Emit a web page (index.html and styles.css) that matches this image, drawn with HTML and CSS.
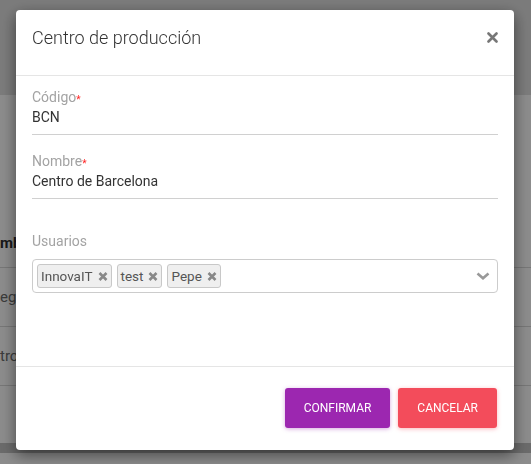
FILE: index.html
```html
<!DOCTYPE html>
<html lang="es">
<head>
    <meta charset="UTF-8">
    <meta name="viewport" content="width=device-width, initial-scale=1.0">
    <title>Centros de producción</title>
    <link rel="stylesheet" href="styles.css">
</head>
<body>
    <div class="page">
        <div class="topbar"></div>
        <div class="table">
            <div class="table-head">mbre</div>
            <div class="table-row">egación</div>
            <div class="table-row">tro de Barcelona</div>
        </div>
        <div class="page-band"></div>
    </div>

    <div class="overlay">
        <div class="modal">
            <div class="modal-header">
                <h4 class="modal-title">Centro de producción</h4>
                <button class="close" aria-label="Cerrar">
                    <svg width="11" height="11" viewBox="0 0 11 11"><path d="M1.5 1.5L9.5 9.5M9.5 1.5L1.5 9.5" stroke="#777" stroke-width="2.6" stroke-linecap="round"/></svg>
                </button>
            </div>

            <div class="modal-body">
                <div class="field">
                    <label>Código<span class="req">*</span></label>
                    <div class="value">BCN</div>
                </div>

                <div class="field">
                    <label>Nombre<span class="req">*</span></label>
                    <div class="value">Centro de Barcelona</div>
                </div>

                <div class="field field-select">
                    <label>Usuarios</label>
                    <div class="select">
                        <div class="tags">
                            <span class="tag">InnovaIT <svg width="10" height="9" viewBox="0 0 10 9"><path d="M1.5 1L8.5 8M8.5 1L1.5 8" stroke="#888" stroke-width="2.6"/></svg></span>
                            <span class="tag">test <svg width="10" height="9" viewBox="0 0 10 9"><path d="M1.5 1L8.5 8M8.5 1L1.5 8" stroke="#888" stroke-width="2.6"/></svg></span>
                            <span class="tag">Pepe <svg width="10" height="9" viewBox="0 0 10 9"><path d="M1.5 1L8.5 8M8.5 1L1.5 8" stroke="#888" stroke-width="2.6"/></svg></span>
                        </div>
                        <svg class="chevron" width="14" height="8" viewBox="0 0 14 8"><path d="M1.5 1.5L7 6.2L12.5 1.5" fill="none" stroke="#999" stroke-width="2.6"/></svg>
                    </div>
                </div>
            </div>

            <div class="modal-footer">
                <button class="btn btn-confirm">Confirmar</button>
                <button class="btn btn-cancel">Cancelar</button>
            </div>
        </div>
    </div>
</body>
</html>
```

FILE: styles.css
```css
body {
    margin: 0;
    font-family: Roboto, "Liberation Sans", sans-serif;
    background-color: #fff;
    overflow: hidden;
}

.page {
    height: 464px;
}

.topbar {
    height: 95px;
    background-color: #e1e1e1;
}

.table {
    padding-top: 136px;
}

.table-head {
    height: 36px;
    line-height: 24px;
    font-size: 15px;
    font-weight: bold;
    color: #2f2f2f;
    border-bottom: 1px solid #d8d8d8;
}

.table-row {
    height: 58px;
    line-height: 58px;
    font-size: 15px;
    color: #6d6d6d;
    border-bottom: 1px solid #d8d8d8;
}

.page-band {
    margin-top: 57px;
    height: 10px;
    background-color: #c3c3c3;
}

.overlay {
    position: fixed;
    top: 0;
    left: 0;
    right: 0;
    bottom: 0;
    background-color: rgba(0, 0, 0, 0.45);
    padding: 10px 16px;
}

.modal {
    width: 498px;
    background-color: #fff;
    border-radius: 4px;
    box-shadow: 0 5px 15px rgba(0, 0, 0, 0.5);
}

.modal-header {
    box-sizing: border-box;
    height: 66px;
    padding: 16px 16px 0;
    border-bottom: 1px solid #e5e5e5;
    display: flex;
    justify-content: space-between;
    align-items: flex-start;
}

.modal-title {
    margin: 0;
    font-size: 18px;
    font-weight: 300;
    line-height: 24px;
    color: #333;
}

.close {
    background: none;
    border: none;
    padding: 0;
    margin-top: 6px;
    height: 11px;
    cursor: pointer;
    display: flex;
}

.modal-body {
    padding: 13px 16px 73px;
}

.field {
    margin-bottom: 18px;
}

.field label {
    display: block;
    font-size: 14px;
    line-height: 16px;
    color: #a3a3a3;
}

.req {
    color: #f22;
    font-size: 10px;
    vertical-align: -1px;
}

.field .value {
    margin-top: 1px;
    padding-bottom: 9px;
    font-size: 14px;
    line-height: 16px;
    color: #333;
    border-bottom: 1px solid #d0d0d0;
}

.field-select {
    margin-top: 34px;
    margin-bottom: 0;
}

.select {
    margin-top: 10px;
    height: 34px;
    box-sizing: border-box;
    border: 1px solid #ccc;
    border-radius: 4px;
    padding: 4px 7px 4px 4px;
    display: flex;
    justify-content: space-between;
    align-items: center;
}

.tags {
    display: flex;
    gap: 5px;
}

.tag {
    box-sizing: border-box;
    height: 24px;
    padding: 0 3px;
    display: flex;
    align-items: center;
    gap: 5px;
    font-size: 13.5px;
    color: #555;
    background-color: #efefef;
    border: 1px solid #c8c8c8;
    border-radius: 3px;
}

.modal-footer {
    border-top: 1px solid #e5e5e5;
    padding: 21px 17px 22px;
    display: flex;
    justify-content: flex-end;
    gap: 8px;
}

.btn {
    height: 40px;
    padding: 0 19px;
    border: none;
    border-radius: 3px;
    font-family: Roboto, "Liberation Sans", sans-serif;
    font-size: 12px;
    text-transform: uppercase;
    color: #fff;
    cursor: pointer;
}

.btn-confirm {
    background-color: #9c27b0;
    box-shadow: 0 1px 4px rgba(156, 39, 176, 0.4);
}

.btn-cancel {
    background-color: #f34c5b;
    box-shadow: 0 1px 4px rgba(243, 76, 91, 0.4);
}
```
